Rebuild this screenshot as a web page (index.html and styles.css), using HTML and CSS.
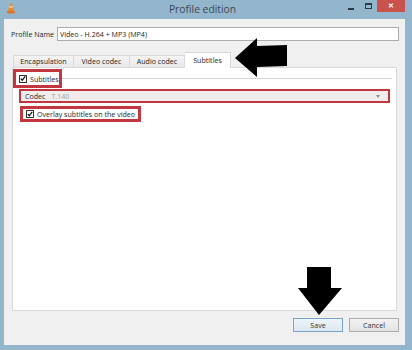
FILE: index.html
```html
<!DOCTYPE html>
<html>
<head>
<meta charset="utf-8">
<link rel="stylesheet" href="styles.css">
</head>
<body>
<div class="win">
  <div class="titlebar">
    <div class="tb-left">
      <svg class="vlc" width="8" height="11" viewBox="0 0 8 11">
        <path d="M3 0.5 L5 0.5 L7 8 L1 8 Z" fill="#e8892b"/>
        <path d="M2.4 3.2 L5.6 3.2 L5.9 4.6 L2.1 4.6 Z" fill="#f6e3c8"/>
        <rect x="0" y="8" width="8" height="2.5" rx="0.8" fill="#d8762a"/>
      </svg>
    </div>
    <div class="title">Profile edition</div>
    <div class="ctrls">
      <div class="min"></div>
      <div class="max"></div>
      <div class="close">✕</div>
    </div>
  </div>
  <div class="client">
    <div class="profile-row">
      <span class="lbl">Profile Name</span>
      <div class="input">Video - H.264 + MP3 (MP4)</div>
    </div>
    <div class="tabbar">
      <div class="tab t1">Encapsulation</div>
      <div class="tab t2">Video codec</div>
      <div class="tab t3">Audio codec</div>
      <div class="tab t4 sel">Subtitles</div>
    </div>
    <div class="pane">
      <div class="group-row">
        <div class="redbox gbox">
          <span class="cb"><svg viewBox="0 0 8 8" width="7" height="7"><path d="M1 4.2 L3 6.3 L7 1.2" fill="none" stroke="#111" stroke-width="1.6"/></svg></span>
          <span class="txt">Subtitles</span>
        </div>
        <div class="gline"></div>
      </div>
      <div class="redbox codec">
        <span class="clbl">Codec</span>
        <span class="cval">T.140</span>
        <span class="carrow"></span>
      </div>
      <div class="redbox overlay">
        <span class="cb"><svg viewBox="0 0 8 8" width="6" height="6"><path d="M1 4.2 L3 6.3 L7 1.2" fill="none" stroke="#111" stroke-width="1.6"/></svg></span>
        <span class="txt">Overlay subtitles on the video</span>
      </div>
    </div>
    <div class="buttons">
      <div class="btn save">Save</div>
      <div class="btn">Cancel</div>
    </div>
  </div>
  <svg class="arrows" width="412" height="350" viewBox="0 0 412 350">
    <polygon points="235,58 257,38 257,46 287,45 287,66 257,67 257,77" fill="#000"/>
    <polygon points="307,267 331,267 331,288 342,288 319,315 298,288 307,288" fill="#000"/>
  </svg>
</div>
</body>
</html>
```
FILE: styles.css
```css
* { box-sizing: border-box; }
html, body { margin: 0; padding: 0; }
body {
  width: 412px;
  height: 350px;
  overflow: hidden;
  font-family: "Open Sans", "Noto Sans", sans-serif;
  color: #1e1e1e;
}
.win {
  position: relative;
  width: 412px;
  height: 350px;
  background: #93b6cd;
}
.titlebar {
  height: 19px;
  display: grid;
  grid-template-columns: 1fr auto 1fr;
  padding-right: 7px;
}
.tb-left { padding: 3px 0 0 7px; }
.vlc { display: block; }
.title {
  font-size: 10.3px;
  line-height: 18px;
  color: #3c4854;
}
.ctrls {
  display: flex;
  justify-content: flex-end;
  align-items: flex-start;
}
.min {
  width: 6px;
  height: 2px;
  background: #2c3a46;
  margin-top: 8px;
}
.max {
  width: 7px;
  height: 6px;
  border: 1px solid #2c3a46;
  border-top-width: 2px;
  margin: 3px 0 0 11px;
}
.close {
  width: 28px;
  height: 12px;
  margin-left: 5px;
  background: #c9524d;
  color: #fff;
  font-size: 7px;
  line-height: 12px;
  text-align: center;
  font-weight: bold;
}
.client {
  margin-left: 4px;
  width: 401px;
  height: 326px;
  background: #f0f0f0;
  padding: 8px 6px 0 7px;
  font-size: 7.1px;
}
.profile-row {
  display: flex;
  height: 14px;
  line-height: 14px;
}
.lbl { width: 46px; white-space: nowrap; }
.input {
  flex: 1;
  background: #fff;
  border: 1px solid #abadb3;
  line-height: 12px;
  padding-left: 2px;
}
.tabbar {
  margin: 11px 2px 0 1px;
  height: 15px;
  display: flex;
  align-items: flex-end;
  padding-left: 1px;
}
.tab {
  height: 12px;
  line-height: 11px;
  text-align: center;
  white-space: nowrap;
  background: linear-gradient(#f4f4f4, #e9e9e9);
  border: 1px solid #d9d9d9;
  border-bottom: none;
  border-left: none;
}
.t1 { width: 61px; border-left: 1px solid #d9d9d9; }
.t2 { width: 56px; }
.t3 { width: 55px; }
.t4 { width: 46px; }
.tab.sel {
  height: 16px;
  line-height: 15px;
  background: #fff;
  margin-bottom: -1px;
  position: relative;
  z-index: 1;
  border-left: none;
}
.pane {
  margin: 0 2px 0 1px;
  height: 244px;
  background: #fff;
  border: 1px solid #d9d9d9;
}
.redbox {
  border: 3px solid #c1363f;
  display: flex;
  align-items: center;
}
.group-row {
  margin-top: 1px;
  display: flex;
  align-items: center;
  height: 19px;
}
.gbox {
  width: 49px;
  height: 19px;
  padding-left: 3px;
}
.cb {
  width: 8px;
  height: 8px;
  border: 1px solid #333;
  background: #fff;
  display: flex;
  align-items: center;
  justify-content: center;
  flex: none;
}
.cb svg { display: block; }
.txt { margin-left: 3px; white-space: nowrap; color: #1e1e1e; }
.gline {
  flex: 1;
  height: 1px;
  background: #d5d5d5;
  margin-right: 4px;
}
.codec {
  margin: 1px 6px 0 6px;
  height: 14px;
  border-width: 2px;
  background: #f1eded;
  padding-left: 4px;
  padding-right: 8px;
}
.clbl { color: #2a2a2a; }
.cval { color: #a2a2a2; margin-left: 6px; flex: 1; }
.carrow {
  width: 0;
  height: 0;
  border-left: 2.5px solid transparent;
  border-right: 2.5px solid transparent;
  border-top: 3px solid #8a8a8a;
}
.overlay {
  margin: 3px 0 0 7px;
  width: 121px;
  height: 16px;
  padding-left: 3px;
}
.buttons {
  margin-top: 7px;
  display: flex;
  justify-content: flex-end;
  gap: 6px;
}
.btn {
  width: 50px;
  height: 14px;
  border: 1px solid #adadad;
  background: linear-gradient(#f2f2f2, #e3e3e3);
  text-align: center;
  line-height: 12px;
  color: #333;
}
.btn.save {
  border-color: #7da2c6;
  background: linear-gradient(#eef4fa, #dde8f2);
}
.arrows {
  position: absolute;
  left: 0;
  top: 0;
  pointer-events: none;
}
```
